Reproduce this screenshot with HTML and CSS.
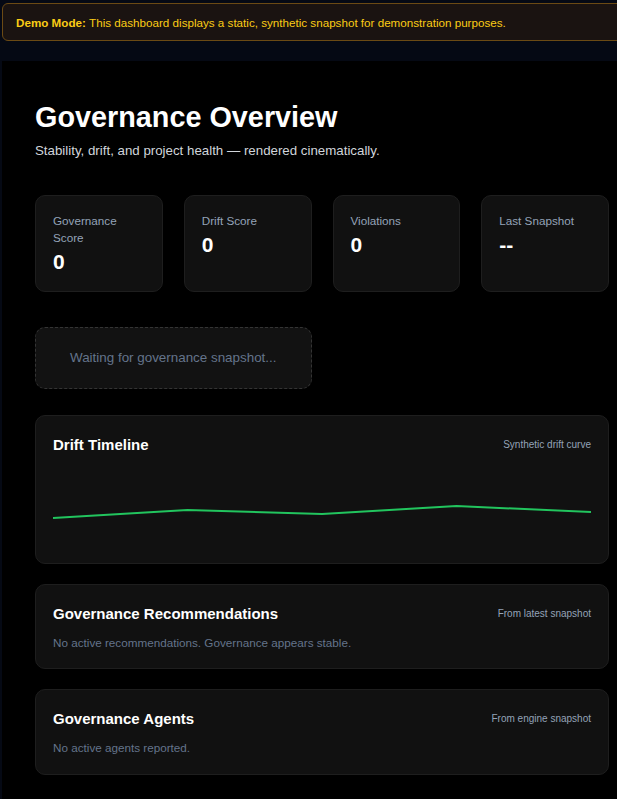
FILE: index.html
```html
<!DOCTYPE html>
<html lang="en">
<head>
<meta charset="utf-8">
<title>Governance Overview</title>
<link rel="stylesheet" href="styles.css">
</head>
<body>
<div class="banner"><strong>Demo Mode:</strong>&nbsp;This dashboard displays a static, synthetic snapshot for demonstration purposes.</div>
<main class="main">
  <h1 class="title">Governance Overview</h1>
  <p class="subtitle">Stability, drift, and project health — rendered cinematically.</p>

  <section class="stats">
    <div class="card">
      <div class="card-label">Governance Score</div>
      <div class="card-value">0</div>
    </div>
    <div class="card">
      <div class="card-label">Drift Score</div>
      <div class="card-value">0</div>
    </div>
    <div class="card">
      <div class="card-label">Violations</div>
      <div class="card-value">0</div>
    </div>
    <div class="card">
      <div class="card-label">Last Snapshot</div>
      <div class="card-value">--</div>
    </div>
  </section>

  <section class="status-row">
    <div class="waiting">Waiting for governance snapshot...</div>
  </section>

  <section class="panel panel-chart">
    <div class="panel-head">
      <h2 class="panel-title">Drift Timeline</h2>
      <span class="panel-meta">Synthetic drift curve</span>
    </div>
    <svg class="chart" viewBox="0 0 538 80" preserveAspectRatio="none">
      <polyline points="0,53 134.5,45 269,49 403.5,41 538,47" fill="none" stroke="#22c55e" stroke-width="2" vector-effect="non-scaling-stroke" stroke-linejoin="round"/>
    </svg>
  </section>

  <section class="panel">
    <div class="panel-head">
      <h2 class="panel-title">Governance Recommendations</h2>
      <span class="panel-meta">From latest snapshot</span>
    </div>
    <p class="panel-text">No active recommendations. Governance appears stable.</p>
  </section>

  <section class="panel panel-last">
    <div class="panel-head">
      <h2 class="panel-title">Governance Agents</h2>
      <span class="panel-meta">From engine snapshot</span>
    </div>
    <p class="panel-text">No active agents reported.</p>
  </section>
</main>
</body>
</html>
```

FILE: styles.css
```css
html, body {
  margin: 0;
  padding: 0;
}
body {
  background: #050914;
  font-family: "Liberation Sans", Arial, sans-serif;
  color: #ffffff;
  overflow-x: hidden;
  min-height: 100vh;
}
.banner {
  box-sizing: border-box;
  margin: 3px 0 0 2px;
  width: calc(100% + 10px);
  height: 38px;
  display: flex;
  align-items: center;
  padding: 0 13px;
  background: #1a1311;
  border: 1px solid #6b4a14;
  border-radius: 6px;
  color: #facc15;
  font-size: 11.65px;
  white-space: nowrap;
}
.banner strong {
  font-weight: 700;
}
.main {
  margin: 20px 0 0 2px;
  background: #000000;
  padding: 40px 8px 30px 33px;
  min-height: 700px;
}
.title {
  margin: 0;
  font-size: 28.8px;
  font-weight: 700;
  line-height: normal;
  color: #ffffff;
}
.subtitle {
  margin: 9px 0 0;
  font-size: 13.3px;
  color: #d1d5db;
  line-height: normal;
}
.stats {
  margin-top: 37px;
  display: grid;
  grid-template-columns: repeat(4, 1fr);
  gap: 21px;
}
.card {
  background: #111111;
  border: 1px solid #1e1e1e;
  border-radius: 10px;
  padding: 16px 17px 17px;
}
.card-label {
  font-size: 11.7px;
  line-height: 17px;
  color: #94a3b8;
}
.card-value {
  margin-top: 4px;
  font-size: 21px;
  font-weight: 700;
  line-height: normal;
  color: #ffffff;
}
.status-row {
  margin-top: 35px;
  display: grid;
  grid-template-columns: repeat(4, 1fr);
  gap: 21px;
}
.waiting {
  grid-column: span 2;
  background: #121212;
  border: 1px dashed #343434;
  border-radius: 10px;
  padding: 21px 10px 22px;
  text-align: center;
  font-size: 13.4px;
  line-height: 17px;
  color: #64748b;
}
.panel {
  margin-top: 20px;
  background: #111111;
  border: 1px solid #1e1e1e;
  border-radius: 10px;
  padding: 20px 17px 19px;
}
.panel-chart {
  margin-top: 26px;
  padding-bottom: 17.5px;
}
.panel-last {
  padding-bottom: 20px;
}
.panel-head {
  display: flex;
  justify-content: space-between;
  align-items: center;
}
.panel-title {
  margin: 0;
  font-size: 15px;
  font-weight: 700;
  line-height: normal;
  color: #ffffff;
}
.panel-meta {
  font-size: 10px;
  color: #94a3b8;
}
.chart {
  display: block;
  width: 100%;
  height: 80px;
  margin-top: 12px;
}
.panel-text {
  margin: 14px 0 0;
  font-size: 11.7px;
  line-height: normal;
  color: #64748b;
}
```
